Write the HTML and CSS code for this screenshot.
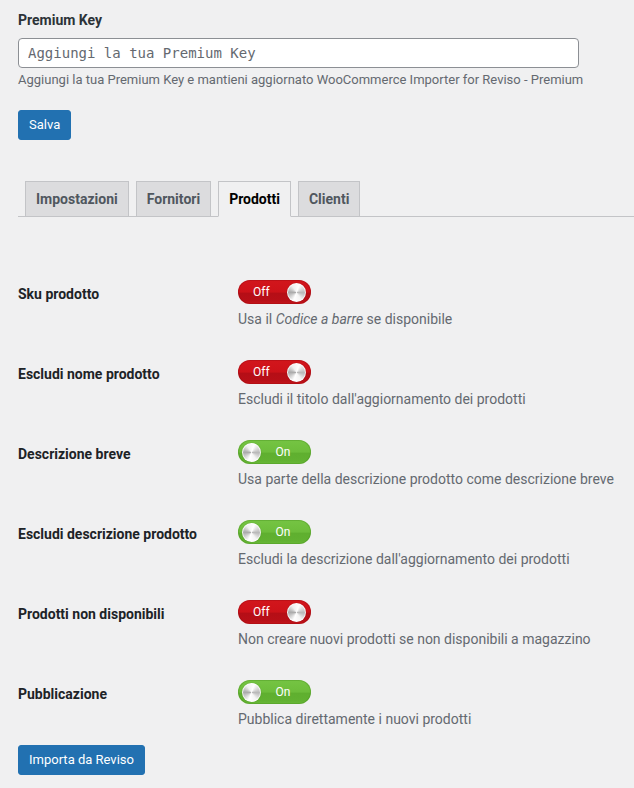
FILE: index.html
```html
<!DOCTYPE html>
<html lang="it">
<head>
<meta charset="utf-8">
<link rel="stylesheet" href="styles.css">
</head>
<body>
<div class="page">
  <section class="premium">
    <label class="field-label" for="pk">Premium Key</label>
    <input id="pk" class="text-input" type="text" placeholder="Aggiungi la tua Premium Key">
    <p class="field-desc">Aggiungi la tua Premium Key e mantieni aggiornato WooCommerce Importer for Reviso - Premium</p>
    <button class="btn">Salva</button>
  </section>

  <nav class="tabs">
    <a class="tab">Impostazioni</a>
    <a class="tab">Fornitori</a>
    <a class="tab active">Prodotti</a>
    <a class="tab">Clienti</a>
  </nav>

  <div class="rows">
    <div class="row">
      <div class="row-label">Sku prodotto</div>
      <div class="row-field">
        <span class="toggle off"><span class="t-text">Off</span><span class="knob"></span></span>
        <p class="row-desc">Usa il <em>Codice a barre</em> se disponibile</p>
      </div>
    </div>
    <div class="row">
      <div class="row-label">Escludi nome prodotto</div>
      <div class="row-field">
        <span class="toggle off"><span class="t-text">Off</span><span class="knob"></span></span>
        <p class="row-desc">Escludi il titolo dall'aggiornamento dei prodotti</p>
      </div>
    </div>
    <div class="row">
      <div class="row-label">Descrizione breve</div>
      <div class="row-field">
        <span class="toggle on"><span class="knob"></span><span class="t-text">On</span></span>
        <p class="row-desc">Usa parte della descrizione prodotto come descrizione breve</p>
      </div>
    </div>
    <div class="row">
      <div class="row-label">Escludi descrizione prodotto</div>
      <div class="row-field">
        <span class="toggle on"><span class="knob"></span><span class="t-text">On</span></span>
        <p class="row-desc">Escludi la descrizione dall'aggiornamento dei prodotti</p>
      </div>
    </div>
    <div class="row">
      <div class="row-label">Prodotti non disponibili</div>
      <div class="row-field">
        <span class="toggle off"><span class="t-text">Off</span><span class="knob"></span></span>
        <p class="row-desc">Non creare nuovi prodotti se non disponibili a magazzino</p>
      </div>
    </div>
    <div class="row">
      <div class="row-label">Pubblicazione</div>
      <div class="row-field">
        <span class="toggle on"><span class="knob"></span><span class="t-text">On</span></span>
        <p class="row-desc">Pubblica direttamente i nuovi prodotti</p>
      </div>
    </div>
  </div>

  <button class="btn">Importa da Reviso</button>
</div>
</body>
</html>
```
FILE: styles.css
```css
html, body {
  margin: 0;
  padding: 0;
  background: #f0f0f1;
}
body {
  font-family: Roboto, "Liberation Sans", sans-serif;
  color: #3c434a;
  font-size: 13px;
}
.page {
  padding: 10px 0 0 18px;
  width: 616px;
}
.premium {
  display: flex;
  flex-direction: column;
  align-items: flex-start;
}
.field-label {
  font-size: 14px;
  font-weight: 700;
  line-height: 20px;
  color: #2c3338;
  margin-bottom: 8px;
}
.text-input {
  box-sizing: border-box;
  width: 561px;
  height: 30px;
  margin: 0;
  padding: 0 9px;
  border: 1px solid #8c8f94;
  border-radius: 4px;
  background: #fff;
  font-family: "DejaVu Sans Mono", monospace;
  font-size: 14px;
  color: #2c3338;
}
.text-input::placeholder {
  color: #646970;
}
.field-desc {
  margin: 3px 0 0;
  font-size: 13px;
  line-height: 18px;
  color: #646970;
}
.btn {
  box-sizing: border-box;
  height: 30px;
  padding: 0 10px;
  border: 1px solid #2271b1;
  border-radius: 3px;
  background: #2271b1;
  color: #fff;
  font-family: Roboto, "Liberation Sans", sans-serif;
  font-size: 13px;
  line-height: 28px;
  cursor: pointer;
}
.premium .btn {
  margin-top: 21px;
}
.tabs {
  display: flex;
  margin-top: 41px;
  border-bottom: 1px solid #c3c4c7;
  align-items: flex-end;
}
.tab {
  box-sizing: border-box;
  margin-left: 7px;
  padding: 5px 10px;
  font-size: 14px;
  font-weight: 700;
  line-height: 24px;
  color: #50575e;
  background: #dcdcde;
  border: 1px solid #c3c4c7;
  border-bottom: none;
  margin-bottom: 0;
}
.tab.active {
  background: #f0f0f1;
  color: #000;
  border-bottom: 1px solid #f0f0f1;
  margin-bottom: -1px;
}
.rows {
  margin-top: 48px;
}
.row {
  display: grid;
  grid-template-columns: 220px 1fr;
  height: 80px;
}
.row-label {
  padding-top: 20px;
  font-size: 14px;
  font-weight: 700;
  line-height: 18px;
  color: #1d2327;
}
.row-field {
  padding-top: 15px;
  display: flex;
  flex-direction: column;
  align-items: flex-start;
}
.row-desc {
  margin: 4px 0 0;
  font-size: 14px;
  line-height: 22px;
  color: #646970;
}
.toggle {
  box-sizing: border-box;
  display: flex;
  align-items: center;
  width: 73px;
  height: 24px;
  border-radius: 12px;
  color: #fff;
  font-size: 12px;
}
.toggle.off {
  justify-content: space-between;
  padding: 0 5px 0 15px;
  background: linear-gradient(to bottom, #d2161c 0%, #cd1219 50%, #b50e16 55%, #b80f17 85%, #c51419 100%);
  box-shadow: inset 0 0 0 1px rgba(150, 10, 15, 0.35);
}
.toggle.on {
  padding: 0 0 0 4px;
  background: linear-gradient(to bottom, #75c443 0%, #6dbd3b 50%, #5faf2f 55%, #61b131 85%, #69b938 100%);
  box-shadow: inset 0 0 0 1px rgba(70, 140, 30, 0.35);
}
.toggle.on .t-text {
  flex: 1;
  text-align: center;
  padding-right: 6px;
}
.knob {
  box-sizing: border-box;
  width: 19px;
  height: 19px;
  border-radius: 50%;
  border: 1px solid rgba(255, 255, 255, 0.8);
  background: conic-gradient(from 20deg, #ffffff, #b8b8b8 20%, #f4f4f4 35%, #ffffff 50%, #a9a9a9 70%, #f0f0f0 85%, #ffffff);
  box-shadow: 0 0 1px rgba(0, 0, 0, 0.3);
}
```
